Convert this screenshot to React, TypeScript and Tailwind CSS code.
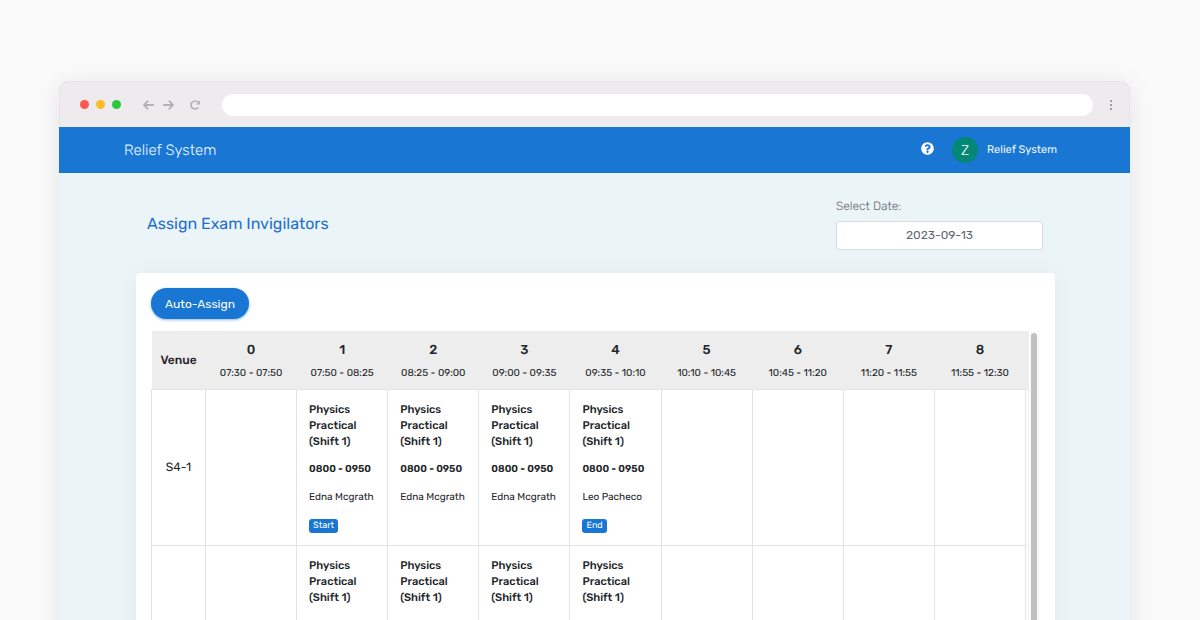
import React from 'react';
import { FaQuestionCircle } from 'react-icons/fa';

type Slot = {
  title: string;
  time: string;
  teacher: string;
  badge?: string;
};

const periods = [
  '07:30 - 07:50',
  '07:50 - 08:25',
  '08:25 - 09:00',
  '09:00 - 09:35',
  '09:35 - 10:10',
  '10:10 - 10:45',
  '10:45 - 11:20',
  '11:20 - 11:55',
  '11:55 - 12:30',
];

const physics = { title: 'Physics Practical (Shift 1)', time: '0800 - 0950' };

const slots: Record<number, Slot> = {
  1: { ...physics, teacher: 'Edna Mcgrath', badge: 'Start' },
  2: { ...physics, teacher: 'Edna Mcgrath' },
  3: { ...physics, teacher: 'Edna Mcgrath' },
  4: { ...physics, teacher: 'Leo Pacheco', badge: 'End' },
};

const venues = ['S4-1', 'S4-2'];

const BrowserBar = () => (
  <div className="flex h-[46px] items-center rounded-t-[10px] border border-b-0 border-[#e6e4e7] bg-[#eeebee] pl-5 pr-4">
    <div className="flex gap-[7px]">
      <span className="size-[9px] rounded-full bg-[#fc5753]" />
      <span className="size-[9px] rounded-full bg-[#fdbc2c]" />
      <span className="size-[9px] rounded-full bg-[#27c83f]" />
    </div>
    <div className="ml-[22px] flex items-center text-[#b3b1b3]">
      <button aria-label="Back">
        <svg className="h-[10px] w-[11px]" viewBox="0 0 11 10" fill="none" stroke="currentColor" strokeWidth="1.8">
          <path d="M5.2 .7 1 5l4.200 4.300M1 5h9.800" />
        </svg>
      </button>
      <button aria-label="Forward" className="ml-[9px]">
        <svg className="h-[10px] w-[11px]" viewBox="0 0 11 10" fill="none" stroke="currentColor" strokeWidth="1.8">
          <path d="M5.800 .7 10 5 5.800 9.300M10 5H.2" />
        </svg>
      </button>
      <button aria-label="Reload" className="ml-4">
        <svg className="size-[10px]" viewBox="0 0 10 10">
          <path d="M8.300 7.300A4 4 0 1 1 8 2.300" fill="none" stroke="currentColor" strokeWidth="1.7" />
          <path d="M10 .3v4.200H5.800z" fill="currentColor" />
        </svg>
      </button>
    </div>
    <input aria-label="Address" className="ml-[22px] h-[22px] min-w-0 flex-1 rounded-full bg-white px-3 text-xs outline-none" />
    <button aria-label="Menu" className="ml-4 flex flex-col items-center gap-[2px] px-px">
      <span className="size-[2px] rounded-full bg-[#858385]" />
      <span className="size-[2px] rounded-full bg-[#858385]" />
      <span className="size-[2px] rounded-full bg-[#858385]" />
    </button>
  </div>
);

const NavBar = () => (
  <nav className="flex h-[46px] items-center bg-[#1976d3] pl-[65px] pr-[73px] text-[#eef8ff]">
    <a href="#" className="text-[15px] font-light">
      Relief System
    </a>
    <button aria-label="Help" className="mb-[3px] ml-auto text-white">
      <FaQuestionCircle className="size-[13px]" />
    </button>
    <span className="ml-[18px] flex size-[26px] items-center justify-center rounded-full bg-[#048876] pt-[2px] text-sm font-light text-white">
      Z
    </span>
    <a href="#" className="ml-[9px] text-[11px]">
      Relief System
    </a>
  </nav>
);

const SlotCell = ({ slot }: { slot?: Slot }) => (
  <td className="border border-[#e2e5e7] px-3 py-3 align-top">
    {slot && (
      <>
        <p className="pr-3 font-medium">{slot.title}</p>
        <p className="mt-[11px] text-[10px] leading-4 font-semibold whitespace-nowrap">{slot.time}</p>
        <p className="mt-3 text-[10px] leading-4 whitespace-nowrap">{slot.teacher}</p>
        {slot.badge && (
          <span className="mt-[14px] block w-fit rounded-[3px] bg-[#1976d3] px-1 text-[9px] leading-[14px] text-white">
            {slot.badge}
          </span>
        )}
      </>
    )}
  </td>
);

const VenueTable = () => (
  <table className="w-full table-fixed border-collapse text-[11px] leading-4 text-[#212529]">
    <thead>
      <tr className="h-[58px] bg-[#ededed]">
        <th className="w-[54px] text-xs font-medium">Venue</th>
        {periods.map((time, index) => (
          <th key={time} className="whitespace-nowrap">
            <div className="pt-[2px] text-[13px] leading-5 font-medium">{index}</div>
            <div className="mt-1 text-[10px] leading-4 font-normal">{time}</div>
          </th>
        ))}
        <th className="w-[3px]" />
      </tr>
    </thead>
    <tbody>
      {venues.map((venue) => (
        <tr key={venue} className="h-[156px] last:h-[180px]">
          <td className="border border-[#e2e5e7] text-center text-xs">{venue}</td>
          {periods.map((time, index) => (
            <SlotCell key={time} slot={slots[index]} />
          ))}
          <td className="border-y border-r border-[#eeeeee]" />
        </tr>
      ))}
    </tbody>
  </table>
);

const App = () => {
  return (
    <div className="h-screen overflow-hidden bg-[#fafafa] pt-[81px] pr-[70px] pl-[59px] font-['Rubik','Roboto',sans-serif] [text-rendering:geometricPrecision]">
      <div className="rounded-t-[10px] bg-[#ebf4f7] shadow-[0_4px_24px_rgba(0,0,0,0.10)]">
        <BrowserBar />
        <NavBar />

        <main className="pr-[75px] pl-[77px]">
          {/* Page heading and date */}
          <div className="flex h-[100px] items-center justify-between pt-px pr-3 pl-[11px]">
            <h1 className="text-base text-[#1f70cc]">Assign Exam Invigilators</h1>
            <div className="w-[207px]">
              <label htmlFor="date" className="block text-xs leading-4 font-light text-[#5c656d]">
                Select Date:
              </label>
              <input
                id="date"
                type="text"
                defaultValue="2023-09-13"
                className="mt-[7px] h-[29px] w-full rounded-[3px] border border-[#d4dde6] bg-white text-center text-xs text-[#5f6870]"
              />
            </div>
          </div>

          {/* Timetable */}
          <div className="rounded-[4px] bg-white p-[15px] shadow-[0_0_20px_rgba(8,21,66,0.05)]">
            <button className="h-[31px] rounded-full bg-[#1976d3] px-[14px] text-xs text-white shadow-[0_1px_3px_rgba(25,118,211,0.5)]">
              Auto-Assign
            </button>
            <div className="mt-3 flex">
              <div className="min-w-0 flex-1">
                <VenueTable />
              </div>
              <div className="ml-px w-[10px] bg-[#fafafa] px-px pt-[2px]">
                <div className="h-full w-[6px] rounded-full bg-[#c1c1c1]" />
              </div>
            </div>
          </div>
        </main>
      </div>
    </div>
  );
};

export default App;
